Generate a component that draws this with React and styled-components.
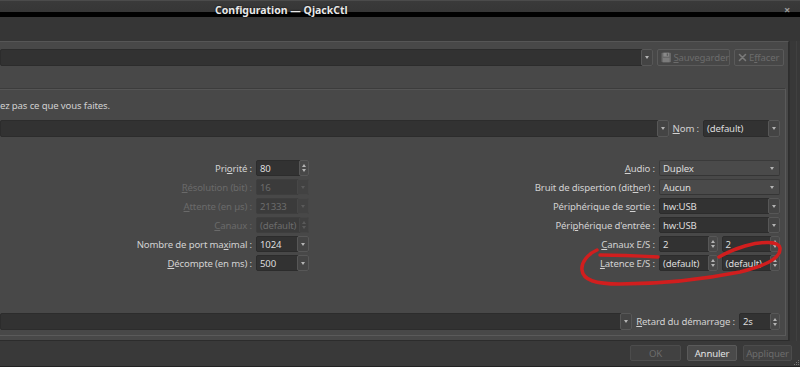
import React from 'react';
import styled, { createGlobalStyle } from 'styled-components';

const Global = createGlobalStyle`
  html, body { margin: 0; padding: 0; background: #393939; }
  body { font-family: "Noto Sans", "DejaVu Sans", sans-serif; }
  #root { width: 800px; height: 367px; }
`;

const Window = styled.div`
  position: relative;
  width: 800px;
  height: 367px;
  overflow: hidden;
  background: #393939;
  color: #d4d4d4;
  font-family: "Noto Sans", "DejaVu Sans", sans-serif;
  font-size: 9.6px;
  letter-spacing: -0.15px;
  display: flex;
  flex-direction: column;
`;

const TitleBar = styled.div`
  flex: none;
  height: 17px;
  box-sizing: border-box;
  border-top: 1px solid #4b4b4b;
  background: linear-gradient(#3a3a3a 0px, #363636 11px, #000 11px, #000 16px);
  display: flex;
  align-items: flex-start;
  padding-left: 215px;
  position: relative;
`;

const Title = styled.div`
  font-weight: bold;
  font-size: 10.5px;
  letter-spacing: 0;
  line-height: 12px;
  padding-top: 3px;
  color: #e8e8e8;
  text-shadow: 0 0 2px #000;
  flex: 1;
`;

const CloseX = styled.div`
  width: 16px;
  margin-right: 5px;
  text-align: center;
  font-size: 11px;
  line-height: 12px;
  padding-top: 3px;
  color: #9a9a9a;
  font-weight: bold;
`;

const TopStrip = styled.div`
  flex: none;
  height: 24px;
  background: #363636;
`;

const Body = styled.div`
  flex: none;
  display: flex;
  height: 300px;
`;

const Pane = styled.div`
  flex: 1;
  box-sizing: border-box;
  background: #484848;
  border-top: 1px solid #565656;
  border-bottom: 1px solid #2c2c2c;
  border-right: 1px solid #2e2e2e;
  display: flex;
  flex-direction: column;
  padding: 7px 4px 5px 0;
`;

const RightStrip = styled.div`
  width: 11px;
  flex: none;
  background: #383838;
  border-left: 1px solid #303030;
  box-sizing: border-box;
  display: flex;
  justify-content: center;
`;

const StripLine = styled.div`
  width: 1px;
  background: #404040;
  margin-left: 2px;
`;

const Row = styled.div`
  display: flex;
  align-items: center;
  height: ${p => p.$h || 17}px;
  gap: ${p => p.$gap ?? 4}px;
  margin-top: ${p => p.$mt || 0}px;
  flex: none;
`;

const Edit = styled.div`
  flex: ${p => (p.$w ? 'none' : 1)};
  width: ${p => (p.$w ? `${p.$w}px` : 'auto')};
  min-width: 0;
  height: 100%;
  box-sizing: border-box;
  display: flex;
  background: ${p => (p.$disabled ? '#3b3b3b' : '#323232')};
  border: 1px solid ${p => (p.$disabled ? '#3e3e3e' : '#2c2c2c')};
  border-radius: 2px;
  color: ${p => (p.$disabled ? '#6c6c6c' : '#dcdcdc')};
`;

const EditText = styled.div`
  flex: 1;
  padding-left: 3px;
  display: flex;
  align-items: center;
  white-space: nowrap;
  overflow: hidden;
`;

const ArrowBox = styled.div`
  width: 12px;
  flex: none;
  box-sizing: border-box;
  background: ${p => (p.$disabled ? '#424242' : '#444')};
  border: 1px solid ${p => (p.$disabled ? '#474747' : '#575757')};
  margin: -1px -1px -1px 0;
  border-radius: 2px;
  display: flex;
  align-items: center;
  justify-content: center;
`;

const Tri = styled.div`
  width: 0;
  height: 0;
  border-left: 2.5px solid transparent;
  border-right: 2.5px solid transparent;
  border-top: 3px solid ${p => (p.$disabled ? '#5a5a5a' : '#b4b4b4')};
  ${p => p.$up && `border-top: none; border-bottom: 3px solid ${p.$disabled ? '#5a5a5a' : '#b4b4b4'};`}
`;

const SpinCol = styled.div`
  width: 10px;
  flex: none;
  box-sizing: border-box;
  background: ${p => (p.$disabled ? '#404040' : '#484848')};
  border: 1px solid ${p => (p.$disabled ? '#454545' : '#575757')};
  margin: -1px -1px -1px 0;
  border-radius: 2px;
  display: flex;
  flex-direction: column;
  align-items: center;
  justify-content: center;
  gap: 2px;
`;

const Plain = styled.div`
  flex: 1;
  height: 100%;
  box-sizing: border-box;
  background: #4a4a4a;
  border: 1px solid #3a3a3a;
  border-bottom-color: #353535;
  border-radius: 2px;
  display: flex;
  align-items: center;
  padding: 0 5px 0 3px;
  color: #dcdcdc;
`;

const PlainText = styled.div`
  flex: 1;
`;

const Btn = styled.div`
  flex: none;
  width: ${p => p.$w}px;
  height: 100%;
  box-sizing: border-box;
  border-radius: 2px;
  background: ${p => (p.$disabled ? '#414141' : '#4a4a4a')};
  border: 1px solid ${p => (p.$disabled ? '#4c4c4c' : '#5a5a5a')};
  color: ${p => (p.$disabled ? '#6c6c6c' : '#e2e2e2')};
  display: flex;
  align-items: center;
  justify-content: center;
  gap: 2px;
  white-space: nowrap;
`;

const ToolBtn = styled(Btn)`
  background: #474747;
  border-color: #5a5a5a;
  justify-content: flex-start;
  padding-left: 3px;
`;

const Label = styled.div`
  white-space: nowrap;
  text-align: right;
  color: ${p => (p.$disabled ? '#6a6a6a' : '#d2d2d2')};
`;

const U = styled.span`
  text-decoration: underline;
  text-underline-offset: 1px;
`;

const InnerFrame = styled.div`
  flex: 1;
  margin-top: 22px;
  margin-right: -2px;
  box-sizing: border-box;
  border-top: 1px solid #3c3c3c;
  border-right: 1px solid #5a5a5a;
  border-bottom: 1px solid #5a5a5a;
  box-shadow: inset 0 1px 0 #555;
  display: flex;
  flex-direction: column;
  padding: 0 5px 5px 0;
`;

const Warning = styled.div`
  margin-top: 11px;
  line-height: 12px;
  color: #d0d0d0;
  white-space: nowrap;
`;

const Grid = styled.div`
  margin-top: 23px;
  display: grid;
  grid-template-columns: 252px 53px 1fr 121px;
  grid-auto-rows: 16px;
  column-gap: 4px;
  row-gap: 3px;
  align-items: center;
`;

const Cell = styled.div`
  height: 16px;
  display: flex;
  gap: 4px;
  align-items: center;
`;

const ButtonBar = styled.div`
  flex: 1;
  display: flex;
  justify-content: flex-end;
  align-items: flex-start;
  padding: 4px 8px 0 0;
  border-bottom: 1px solid #222;
  position: relative;
`;

const BarBtns = styled.div`
  display: flex;
  gap: 6px;
  height: 16px;
`;

const Grip = styled.svg`
  position: absolute;
  right: 0;
  bottom: 0;
`;

const Overlay = styled.svg`
  position: absolute;
  left: 0;
  top: 0;
  pointer-events: none;
`;

function EditCombo({ value, w, disabled }) {
  return (
    <Edit $w={w} $disabled={disabled}>
      <EditText>{value}</EditText>
      <ArrowBox $disabled={disabled}><Tri $disabled={disabled} /></ArrowBox>
    </Edit>
  );
}

function Spin({ value, w, disabled }) {
  return (
    <Edit $w={w} $disabled={disabled}>
      <EditText>{value}</EditText>
      <SpinCol $disabled={disabled}>
        <Tri $up $disabled={disabled} />
        <Tri $disabled={disabled} />
      </SpinCol>
    </Edit>
  );
}

function PlainCombo({ value }) {
  return (
    <Plain>
      <PlainText>{value}</PlainText>
      <Tri />
    </Plain>
  );
}

function Lbl({ parts, disabled }) {
  return (
    <Label $disabled={disabled}>
      {parts[0]}<U>{parts[1]}</U>{parts[2]}
    </Label>
  );
}

function Field({ f }) {
  if (f.type === 'spin') return <Spin value={f.value} disabled={f.disabled} />;
  if (f.type === 'edit') return <EditCombo value={f.value} disabled={f.disabled} />;
  if (f.type === 'plain') return <PlainCombo value={f.value} />;
  if (f.type === 'pair')
    return (
      <>
        <Spin value={f.value} />
        <Spin value={f.value} />
      </>
    );
  return null;
}

const left = [
  { label: ['Pri', 'o', 'rité :'], f: { type: 'spin', value: '80' } },
  { label: ['', 'R', 'ésolution (bit) :'], disabled: true, f: { type: 'edit', value: '16', disabled: true } },
  { label: ['', 'A', 'ttente (en µs) :'], disabled: true, f: { type: 'edit', value: '21333', disabled: true } },
  { label: ['', 'C', 'anaux :'], disabled: true, f: { type: 'spin', value: '(default)', disabled: true } },
  { label: ['Nombre de port ma', 'x', 'imal :'], f: { type: 'edit', value: '1024' } },
  { label: ['', 'D', 'écompte (en ms) :'], f: { type: 'edit', value: '500' } },
];

const right = [
  { label: ['', 'A', 'udio :'], f: { type: 'plain', value: 'Duplex' } },
  { label: ['Bruit de dispertion (dit', 'h', 'er) :'], f: { type: 'plain', value: 'Aucun' } },
  { label: ['Périphérique de s', 'o', 'rtie :'], f: { type: 'edit', value: 'hw:USB' } },
  { label: ['Péri', 'p', "hérique d'entrée :"], f: { type: 'edit', value: 'hw:USB' } },
  { label: ['', 'C', 'anaux E/S :'], f: { type: 'pair', value: '2' } },
  { label: ['', 'L', 'atence E/S :'], f: { type: 'pair', value: '(default)' } },
];

function Floppy() {
  return (
    <svg width="11" height="11" viewBox="0 0 11 11">
      <rect x="0.5" y="0.5" width="10" height="10" rx="1" fill="#6a6a6a" />
      <rect x="2.5" y="0.5" width="6" height="4" fill="#8a8a8a" />
      <rect x="6" y="1.2" width="1.5" height="2.5" fill="#5a5a5a" />
      <rect x="2" y="6" width="7" height="4.5" fill="#7c7c7c" />
    </svg>
  );
}

function Cross() {
  return (
    <svg width="9" height="9" viewBox="0 0 9 9">
      <path d="M1.5 1.5 L7.5 7.5 M7.5 1.5 L1.5 7.5" stroke="#7a7a7a" strokeWidth="1.6" strokeLinecap="round" />
    </svg>
  );
}

export default function App() {
  return (
    <Window>
      <Global />
      <TitleBar>
        <Title>Configuration — QjackCtl</Title>
        <CloseX>×</CloseX>
      </TitleBar>
      <TopStrip />
      <Body>
        <Pane>
          <Row $h={17}>
            <EditCombo value="" />
            <ToolBtn $w={73} $disabled>
              <Floppy />
              <span><U>S</U>auvegarder</span>
            </ToolBtn>
            <ToolBtn $w={50} $disabled>
              <Cross />
              <span>E<U>f</U>facer</span>
            </ToolBtn>
          </Row>
          <InnerFrame>
            <Warning>ez pas ce que vous faites.</Warning>
            <Row $h={17} $mt={8}>
              <EditCombo value="" />
              <Lbl parts={['', 'N', 'om :']} />
              <EditCombo value="(default)" w={77} />
            </Row>
            <Grid>
              {left.map((l, i) => (
                <React.Fragment key={i}>
                  <Lbl parts={l.label} disabled={l.disabled} />
                  <Cell><Field f={l.f} /></Cell>
                  <Lbl parts={right[i].label} />
                  <Cell><Field f={right[i].f} /></Cell>
                </React.Fragment>
              ))}
            </Grid>
            <Row $h={17} $mt={42}>
              <EditCombo value="" />
              <Lbl parts={['', 'R', 'etard du démarrage :']} />
              <Spin value="2s" w={41} />
            </Row>
          </InnerFrame>
        </Pane>
        <RightStrip><StripLine /></RightStrip>
      </Body>
      <ButtonBar>
        <BarBtns>
          <Btn $w={51} $disabled>OK</Btn>
          <Btn $w={50}>Annuler</Btn>
          <Btn $w={49} $disabled>Appliquer</Btn>
        </BarBtns>
        <Grip width="6" height="6" viewBox="0 0 6 6">
          <rect x="4" y="0" width="1" height="1" fill="#777" />
          <rect x="2" y="2" width="1" height="1" fill="#777" />
          <rect x="4" y="2" width="1" height="1" fill="#777" />
          <rect x="0" y="4" width="1" height="1" fill="#777" />
          <rect x="2" y="4" width="1" height="1" fill="#777" />
          <rect x="4" y="4" width="1" height="1" fill="#777" />
        </Grip>
      </ButtonBar>
      <Overlay width="800" height="367" viewBox="0 0 800 367">
        <path
          d="M658 257 C 640 256, 615 255, 600 255 M597 250 C 588 254, 581 262, 582 270 C 583 280, 595 284, 620 284 C 660 284, 700 280, 740 272 C 765 266, 781 258, 780 248 C 779 241, 762 241, 745 246 C 735 249, 726 253, 719 257"
          fill="none"
          stroke="#d11e1e"
          strokeWidth="3.5"
          strokeLinecap="round"
          strokeLinejoin="round"
        />
      </Overlay>
    </Window>
  );
}
